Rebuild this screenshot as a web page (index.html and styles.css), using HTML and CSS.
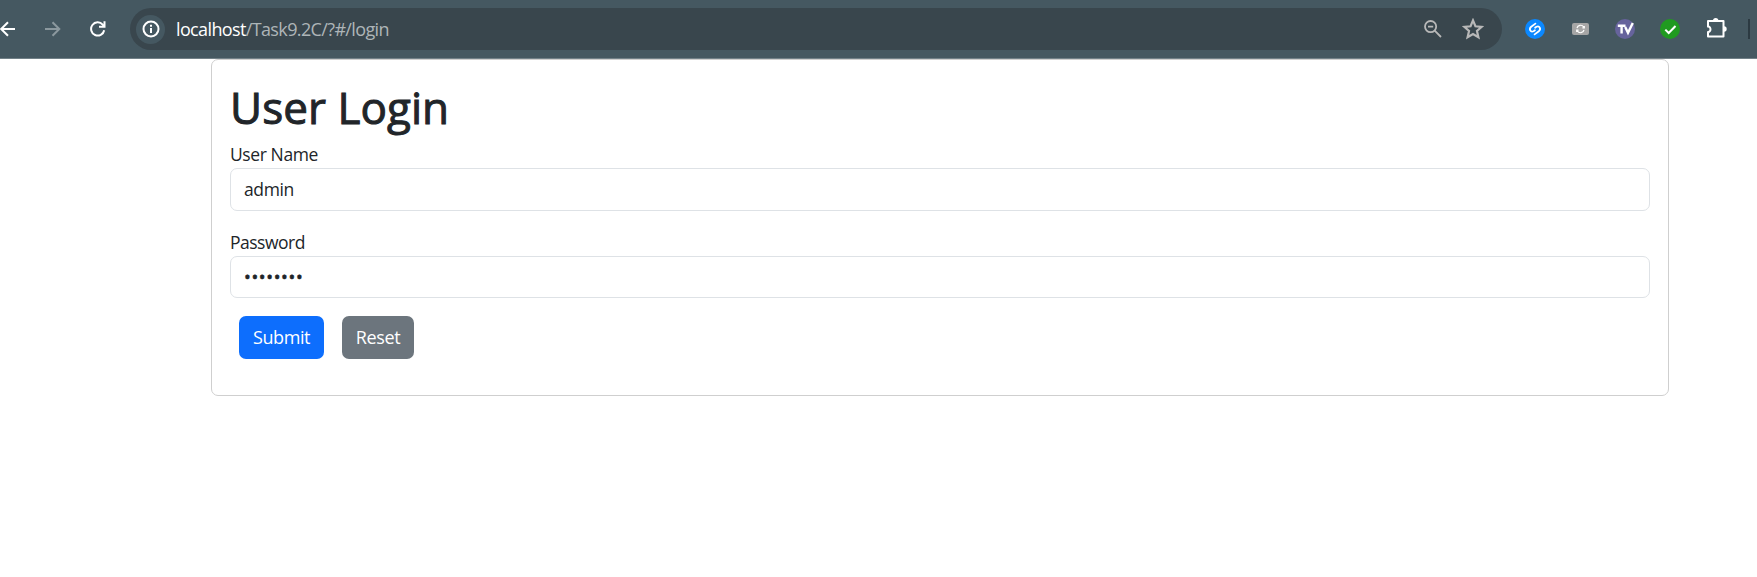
FILE: index.html
```html
<!DOCTYPE html>
<html lang="en">
<head>
<meta charset="utf-8">
<title>User Login</title>
<link rel="stylesheet" href="styles.css">
</head>
<body>
<header class="toolbar">
  <svg class="nav back" viewBox="0 0 16 16"><path d="M15 8H1.5M8 1.2L1.2 8L8 14.8"/></svg>
  <svg class="nav forward" viewBox="0 0 16 16"><path d="M0 8H14M7.5 1.2L14.3 8L7.5 14.8"/></svg>
  <svg class="nav reload" viewBox="0 0 16 16"><path d="M14.2 9.2A6.6 6.6 0 1 1 12.7 3.6L14.2 5.2M14.5 .3V5.7H9"/></svg>
  <div class="address">
    <span class="info"><svg viewBox="0 0 18 18"><circle cx="9" cy="9" r="7.5"/><path d="M9 8V13M9 4.8V6.8"/></svg></span>
    <span class="url"><b class="host">localhost</b>/Task9.2C/?#/login</span>
    <svg class="magnifier" viewBox="0 0 18 18"><circle cx="6.6" cy="6.6" r="5.6"/><path d="M4 6.6H9.2M10.7 10.7L17 17"/></svg>
    <svg class="star" viewBox="0 0 20 20"><path d="M10 2.2L12.2 7.5L18 8L13.6 11.8L14.9 17.5L10 14.5L5.1 17.5L6.4 11.8L2 8L7.8 7.5Z"/></svg>
  </div>
  <svg class="ext shazam" viewBox="0 0 20 20"><circle class="disc" cx="10" cy="10" r="10" fill="#0b88ff"/><path d="M10.4 4.6L6.2 7.8C3.6 10 5.4 13.6 8.6 12.2L9.9 11.2M9.6 15.4L13.8 12.2C16.4 10 14.6 6.4 11.4 7.8L10.1 8.8"/></svg>
  <svg class="ext sync" viewBox="0 0 17 12"><rect class="disc" width="17" height="12" rx="2" fill="#a6a6a6"/><path d="M5 5.2A3.6 3.6 0 0 1 11.6 4M12 6.8A3.6 3.6 0 0 1 5.4 8M12.3 2.9V4.8H10.4M4.7 9.1V7.2H6.6"/></svg>
  <svg class="ext tv" viewBox="0 0 20 20"><circle class="disc" cx="10" cy="10" r="10" fill="#66639c"/><path d="M2.8 6.8H10.5M6.6 6.8V14.6M10.2 8L13 13.8L17.8 4"/></svg>
  <svg class="ext check" viewBox="0 0 20 20"><circle class="disc" cx="10" cy="10" r="10" fill="#209a20"/><path d="M5.3 10.6L8.7 14L15.5 7"/></svg>
  <svg class="ext puzzle" viewBox="0 0 20 20"><path class="line" d="M2 3H17.5V18.5H2V14C5.3 14.2 5.3 8.4 2 8.6Z"/><path class="knob" d="M7 2.6A2.7 2.7 0 0 1 12.4 2.6ZM18 8.3A2.7 2.7 0 0 1 18 13.7Z"/></svg>
  <span class="divider"></span>
</header>
<main class="card">
  <h1 class="title">User Login</h1>
  <label class="label name" for="user">User Name</label>
  <input class="field" id="user" type="text" value="admin">
  <label class="label pass" for="password">Password</label>
  <input class="field secret" id="password" type="password" value="password">
  <div class="actions">
    <button class="btn submit" type="button">Submit</button>
    <button class="btn reset" type="button">Reset</button>
  </div>
</main>
</body>
</html>
```
FILE: styles.css
```css
* { box-sizing: border-box; }
body { margin: 0; background: #fff; color: #212529; font: 18px/27px "Open Sans", sans-serif; overflow: hidden; }
svg { display: block; flex: none; fill: none; }
.toolbar { height: 59px; background: #455861; border-bottom: 1px solid #718087; display: flex; align-items: center; }
.nav { width: 16px; height: 16px; stroke: #fff; stroke-width: 2; }
.forward { margin-left: 29px; stroke: #8b989e; }
.reload { margin-left: 29px; }
.address { width: 1372px; height: 42px; margin-left: 24px; border-radius: 21px; background: #39464d; display: flex; align-items: center; flex: none; padding: 0 18px 0 6px; }
.info { width: 29px; height: 29px; border-radius: 50%; background: #455861; display: grid; place-items: center; }
.info svg { width: 18px; height: 18px; stroke: #fff; stroke-width: 2; }
.url { flex: 1; margin-left: 11px; color: #aeb5b8; letter-spacing: -.63px; white-space: nowrap; }
.host { color: #fff; font-weight: 400; }
.magnifier { width: 18px; height: 18px; stroke: #b8b8b8; stroke-width: 1.8; margin-right: 20px; }
.star { width: 22px; height: 22px; stroke: #b8b8b8; stroke-width: 2; }
.ext { width: 20px; height: 20px; stroke: #fff; stroke-width: 2; }
.disc { stroke: none; }
.shazam { margin-left: 23px; stroke-width: 1.8; stroke-linecap: round; }
.sync { width: 17px; height: 12px; margin-left: 27px; stroke-width: 1.2; }
.tv { margin-left: 26px; stroke-width: 2.4; }
.check { margin-left: 25px; }
.puzzle { margin-left: 26px; overflow: visible; margin-bottom: 3px; }
.line { stroke-linejoin: round; }
.knob { fill: #fff; stroke: none; }
.divider { width: 2px; height: 20px; margin-left: 22px; background: #2c3a42; }
.card { width: 1458px; height: 337px; margin-left: 211px; border: 1px solid #cfcfcf; border-radius: 7px; padding: 20px 18px 0; display: flex; flex-direction: column; }
.title { margin: 0; font-size: 44px; line-height: 54px; font-weight: 400; letter-spacing: .05px; -webkit-text-stroke: 1px #212529; }
.label { font-size: 17.5px; line-height: 27px; letter-spacing: -.4px; }
.name { margin-top: 7px; }
.field { width: 100%; height: 43px; border: 1px solid #dee2e6; border-radius: 7px; padding: 0 13px 2px; font: inherit; font-size: 17.5px; color: inherit; letter-spacing: -.4px; background: #fff; }
.pass { margin-top: 18px; letter-spacing: -.5px; }
.secret { height: 42px; font-size: 18px; letter-spacing: .65px; padding-bottom: 0; -webkit-text-stroke: .5px #212529; }
.actions { display: flex; gap: 18px; padding: 18px 9px 0; }
.btn { height: 43px; border: 0; border-radius: 7px; padding: 0; font: inherit; color: #fff; }
.submit { width: 85px; background: #0d6efd; letter-spacing: -.4px; }
.reset { width: 72px; background: #6c757d; letter-spacing: -.4px; }
```
